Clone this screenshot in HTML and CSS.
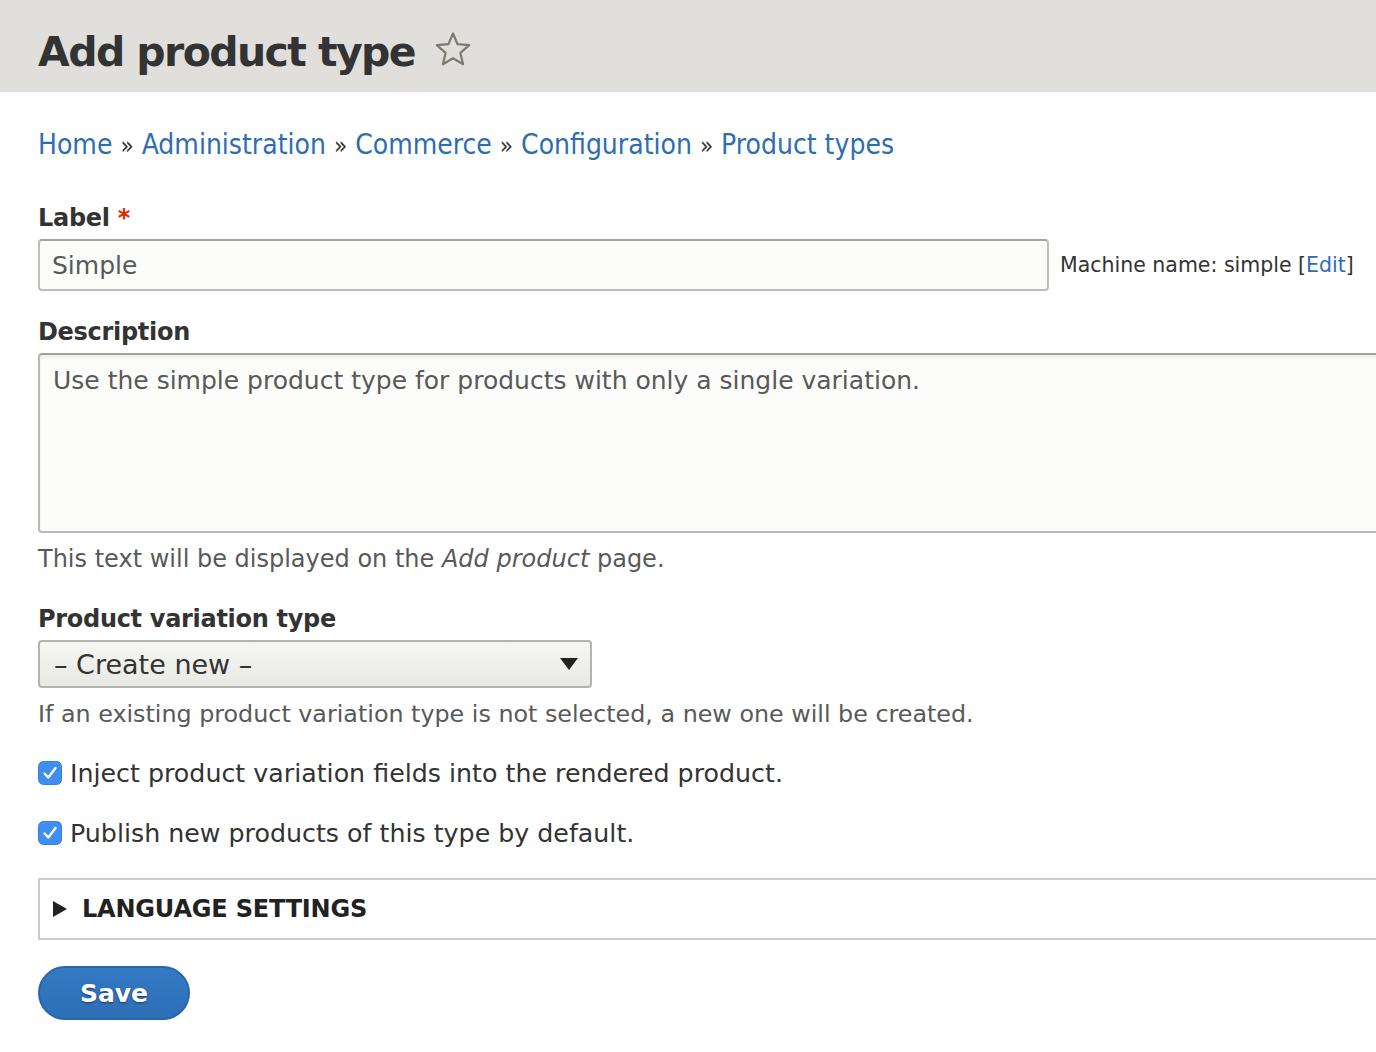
FILE: index.html
```html
<!DOCTYPE html>
<html>
<head>
<meta charset="utf-8">
<title>Add product type</title>
<link rel="stylesheet" href="styles.css">
</head>
<body>
<header class="page-header">
  <h1 class="page-title">Add product type</h1>
  <svg class="star" width="38" height="38" viewBox="0 0 38 38"><path d="M19 2.5 L23.6 13.2 L35.2 14.2 L26.4 21.9 L29.1 33.3 L19 27.2 L8.9 33.3 L11.6 21.9 L2.8 14.2 L14.4 13.2 Z" fill="none" stroke="#7b7a70" stroke-width="2.2" stroke-linejoin="round"/></svg>
</header>
<main class="content">
  <nav class="breadcrumb">
    <a href="#">Home</a> <span class="sep">»</span> <a href="#">Administration</a> <span class="sep">»</span> <a href="#">Commerce</a> <span class="sep">»</span> <a href="#">Configuration</a> <span class="sep">»</span> <a href="#">Product types</a>
  </nav>

  <div class="form-item first">
    <label class="form-label">Label <span class="required">*</span></label>
    <div class="label-row">
      <div class="text-input">Simple</div>
      <span class="machine-name">Machine name: simple [<a href="#">Edit</a>]</span>
    </div>
  </div>

  <div class="form-item desc">
    <label class="form-label">Description</label>
    <div class="textarea">Use the simple product type for products with only a single variation.</div>
    <div class="help">This text will be displayed on the <em>Add product</em> page.</div>
  </div>

  <div class="form-item variation">
    <label class="form-label">Product variation type</label>
    <div class="select"><span>– Create new –</span><span class="arrow"></span></div>
    <div class="help narrow">If an existing product variation type is not selected, a new one will be created.</div>
  </div>

  <div class="checkbox-row">
    <svg class="cb" width="24" height="24" viewBox="0 0 24 24"><rect x="0.5" y="0.5" width="23" height="23" rx="5" fill="#3f8ff2" stroke="#3a7fd8"/><path d="M6.5 12.5 L10.3 16.5 L17.5 7" fill="none" stroke="#fff" stroke-width="2.4" stroke-linecap="round" stroke-linejoin="round"/></svg>
    <span>Inject product variation fields into the rendered product.</span>
  </div>
  <div class="checkbox-row">
    <svg class="cb" width="24" height="24" viewBox="0 0 24 24"><rect x="0.5" y="0.5" width="23" height="23" rx="5" fill="#3f8ff2" stroke="#3a7fd8"/><path d="M6.5 12.5 L10.3 16.5 L17.5 7" fill="none" stroke="#fff" stroke-width="2.4" stroke-linecap="round" stroke-linejoin="round"/></svg>
    <span>Publish new products of this type by default.</span>
  </div>

  <div class="details">
    <span class="tri"></span>
    <span class="summary">LANGUAGE SETTINGS</span>
  </div>

  <button class="save">Save</button>
</main>
</body>
</html>
```

FILE: styles.css
```css
html, body {
  margin: 0;
  padding: 0;
  background: #fff;
  overflow: hidden;
}
body {
  font-family: "DejaVu Sans", "Lucida Grande", sans-serif;
  color: #333;
}
.page-header {
  background: #e0dfdb;
  height: 92px;
  padding: 12px 0 0 38px;
  display: flex;
  align-items: center;
  box-sizing: border-box;
}
.page-title {
  margin: 0;
  font-size: 41px;
  font-weight: bold;
  color: #333;
  letter-spacing: -1.6px;
}
.star {
  margin-left: 19px;
  margin-top: -4px;
}
.content {
  padding: 0 0 0 38px;
}
a {
  color: #2f6db3;
  text-decoration: none;
}
.breadcrumb {
  font-family: "DejaVu Sans Condensed", "DejaVu Sans", sans-serif;
  font-size: 28px;
  margin-top: 36px;
  line-height: 34px;
}
.breadcrumb .sep {
  color: #333;
  font-size: 24px;
}
.form-item.first {
  margin-top: 39px;
}
.form-item.desc {
  margin-top: 25px;
}
.form-item.variation {
  margin-top: 27px;
}
.form-label {
  display: block;
  font-weight: bold;
  font-size: 24px;
  letter-spacing: -0.3px;
  line-height: 32px;
  margin-bottom: 5px;
}
.required {
  color: #e32700;
}
.label-row {
  display: flex;
  align-items: center;
}
.text-input {
  width: 1011px;
  height: 52px;
  box-sizing: border-box;
  border: 2px solid #bdbdbb;
  border-top-color: #a3a3a0;
  border-radius: 4px;
  background: #fcfcfa;
  font-size: 25px;
  color: #595959;
  padding: 8px 12px;
  line-height: 34px;
}
.machine-name {
  margin-left: 11px;
  font-size: 20.5px;
  white-space: nowrap;
}
.textarea {
  width: 1400px;
  height: 180px;
  box-sizing: border-box;
  border: 2px solid #b8b8b6;
  border-top-color: #a0a0a0;
  border-radius: 4px;
  background: #fcfcfa;
  box-shadow: inset 0 3px 3px rgba(0,0,0,0.06);
  font-size: 25px;
  color: #595959;
  padding: 9px 13px;
  line-height: 34px;
}
.help {
  font-size: 24px;
  color: #595959;
  line-height: 34px;
}
.help.narrow {
  font-size: 23.8px;
}
.desc .help {
  margin-top: 9px;
}
.variation .help {
  margin-top: 9px;
}
.select {
  width: 554px;
  height: 48px;
  box-sizing: border-box;
  border: 2px solid #b3b3b0;
  border-radius: 4px;
  background: linear-gradient(#f6f6f3, #e8e8e4);
  display: flex;
  align-items: center;
  justify-content: space-between;
  padding: 0 12px 0 14px;
  font-size: 27px;
  color: #333;
}
.select .arrow {
  width: 0;
  height: 0;
  border-left: 9px solid transparent;
  border-right: 9px solid transparent;
  border-top: 12px solid #222;
}
.checkbox-row {
  display: flex;
  align-items: center;
  font-size: 25.3px;
  color: #333;
  margin-top: 24px;
  height: 36px;
}
.cb {
  margin-right: 8px;
  flex: none;
}
.details {
  margin-top: 27px;
  width: 1400px;
  height: 62px;
  box-sizing: border-box;
  border: 2px solid #ccc;
  display: flex;
  align-items: center;
  padding-left: 13px;
}
.tri {
  width: 0;
  height: 0;
  border-top: 8px solid transparent;
  border-bottom: 8px solid transparent;
  border-left: 14px solid #222;
  margin-right: 15px;
}
.summary {
  font-weight: bold;
  font-size: 24px;
  letter-spacing: -0.2px;
  color: #222;
}
.save {
  display: block;
  margin-top: 26px;
  width: 152px;
  height: 54px;
  border-radius: 27px;
  border: 2px solid #2b66a6;
  background: linear-gradient(#3479c4, #2d6fb8);
  color: #fff;
  font-family: "DejaVu Sans", sans-serif;
  font-weight: bold;
  font-size: 25px;
  text-shadow: 0 1px 2px rgba(0,0,0,0.5);
  padding: 0;
}
```
